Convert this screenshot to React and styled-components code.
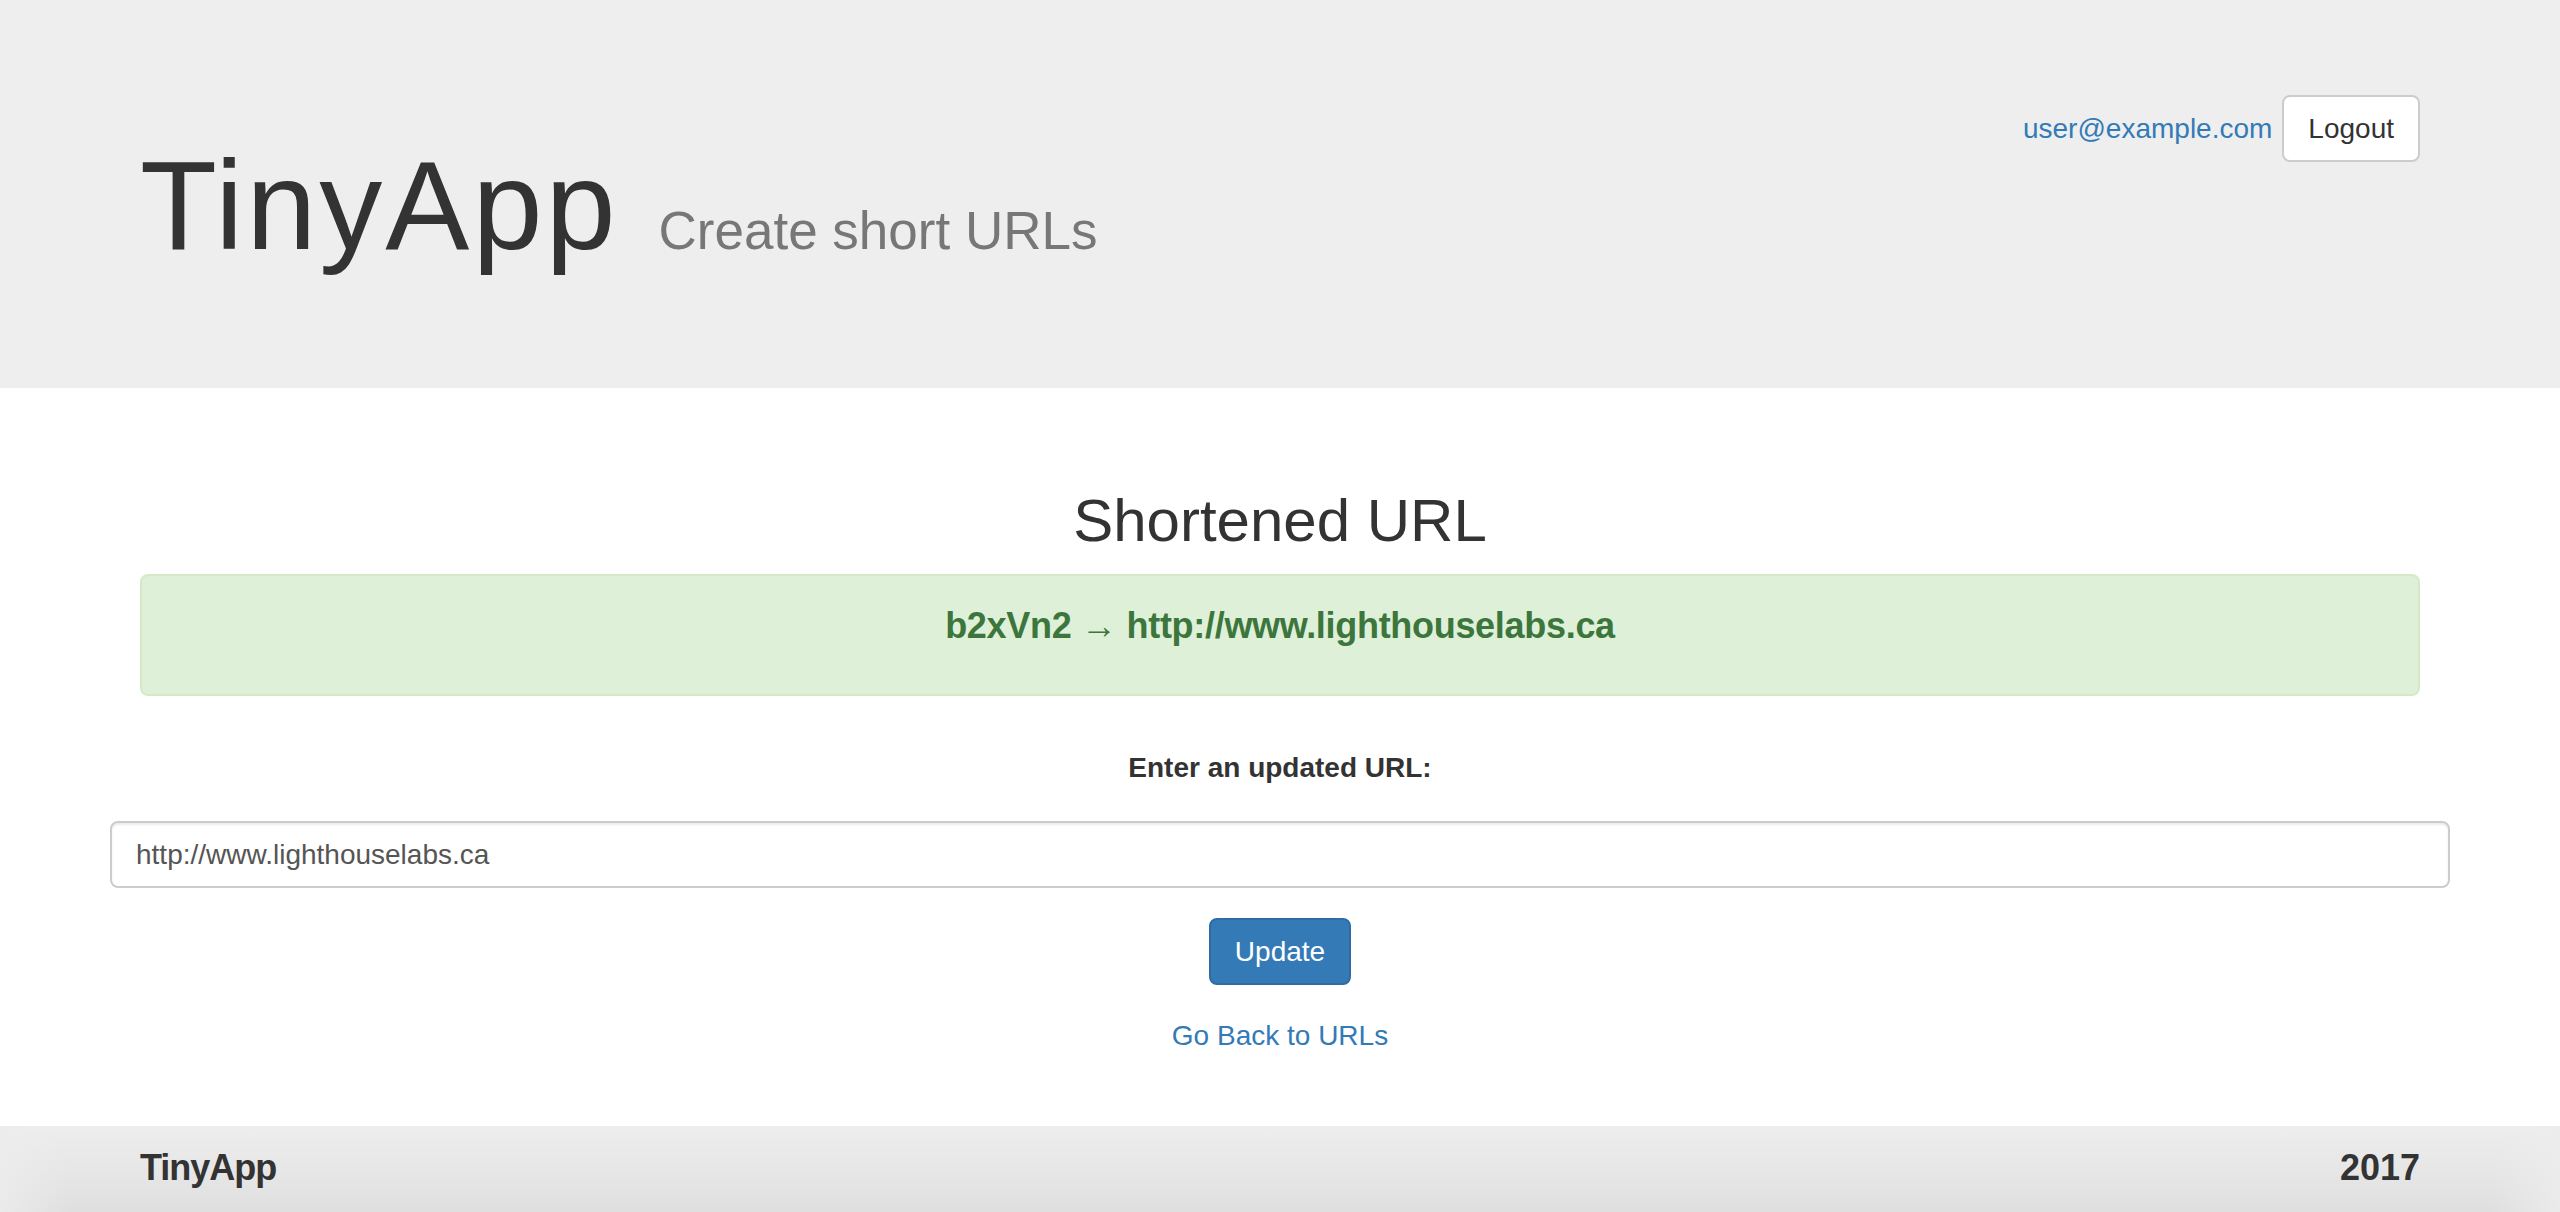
import React from "react";
import styled, { createGlobalStyle } from "styled-components";

const GlobalStyle = createGlobalStyle`
  html, body { margin: 0; padding: 0; background: #fff; }
  body {
    font-family: "Liberation Sans", Arial, Helvetica, sans-serif;
    font-size: 28px;
    line-height: 40px;
    color: #333;
  }
  * { box-sizing: border-box; }
`;

const Container = styled.div`
  width: ${(p) => (p.$wide ? 2340 : 2280)}px;
  margin: 0 auto;
`;

const Jumbotron = styled.header`
  background: #eeeeee;
  padding-bottom: 112px;
`;

const HeaderRow = styled(Container)`
  display: flex;
  justify-content: space-between;
  align-items: flex-start;
`;

const Title = styled.h1`
  margin: 136px 0 0;
  display: flex;
  align-items: baseline;
  height: 140px;
  font-size: 126px;
  line-height: 140px;
  font-weight: 400;
  color: #333;
  letter-spacing: 3px;
`;

const Subtitle = styled.span`
  margin-left: 40px;
  font-size: 53px;
  line-height: 60px;
  color: #777;
  letter-spacing: 0;
`;

const UserNav = styled.nav`
  margin-top: 95px;
  display: flex;
  align-items: center;
  gap: 10px;
`;

const Link = styled.a`
  color: #337ab7;
  text-decoration: none;
  font-size: 28px;
  line-height: 40px;
`;

const Button = styled.button`
  font-family: inherit;
  font-size: 28px;
  line-height: 40px;
  height: 67px;
  padding: 0 24px;
  border-radius: 8px;
  border: 2px solid ${(p) => (p.$primary ? "#2e6da4" : "#cccccc")};
  background: ${(p) => (p.$primary ? "#337ab7" : "#ffffff")};
  color: ${(p) => (p.$primary ? "#ffffff" : "#333333")};
  cursor: pointer;
`;

const Main = styled.main`
  padding-top: 100px;
`;

const Heading = styled.h2`
  margin: 0 0 20px;
  text-align: center;
  font-size: 60px;
  line-height: 66px;
  font-weight: 400;
  color: #333;
`;

const Alert = styled.div`
  background: #dff0d8;
  border: 2px solid #d6e9c6;
  border-radius: 8px;
  padding: 30px;
  color: #3c763d;
  text-align: center;
`;

const AlertText = styled.h4`
  margin: 0 0 18px;
  font-size: 36px;
  line-height: 40px;
  font-weight: 700;
  letter-spacing: -0.3px;
`;

const Form = styled.form`
  margin-top: 52px;
  display: flex;
  flex-direction: column;
  align-items: center;
`;

const Label = styled.label`
  font-weight: 700;
  font-size: 28px;
  line-height: 40px;
  margin-bottom: 33px;
`;

const Input = styled.input`
  width: 100%;
  height: 67px;
  padding: 0 24px;
  font-family: inherit;
  font-size: 28px;
  color: #555;
  background: #fff;
  border: 2px solid #cccccc;
  border-radius: 8px;
  box-shadow: inset 0 2px 2px rgba(0, 0, 0, 0.075);
  outline: none;
  margin-bottom: 30px;
`;

const BackLink = styled(Link)`
  display: block;
  margin-top: 31px;
  text-align: center;
`;

const Footer = styled.footer`
  margin-top: 70px;
  height: 86px;
  padding-top: 22px;
  background:
    linear-gradient(to right, rgba(236,236,236,0.9) 0, rgba(236,236,236,0) 70px,
      rgba(236,236,236,0) calc(100% - 70px), rgba(236,236,236,0.9) 100%),
    linear-gradient(to bottom, #ededed 0%, #e6e6e6 55%, #dfdfdf 100%);
`;

const FooterRow = styled(Container)`
  display: flex;
  justify-content: space-between;
  align-items: baseline;
`;

const FooterText = styled.span`
  font-size: 36px;
  line-height: 40px;
  font-weight: 700;
  color: #333;
  letter-spacing: ${(p) => (p.$tight ? "-1px" : "0")};
`;

export default function App() {
  return (
    <>
      <GlobalStyle />
      <Jumbotron>
        <HeaderRow>
          <Title>
            TinyApp
            <Subtitle>Create short URLs</Subtitle>
          </Title>
          <UserNav>
            <Link href="#">user@example.com</Link>
            <Button type="button">Logout</Button>
          </UserNav>
        </HeaderRow>
      </Jumbotron>
      <Main>
        <Container>
          <Heading>Shortened URL</Heading>
          <Alert>
            <AlertText>b2xVn2 → http://www.lighthouselabs.ca</AlertText>
          </Alert>
        </Container>
        <Container $wide>
          <Form onSubmit={(e) => e.preventDefault()}>
            <Label htmlFor="longURL">Enter an updated URL:</Label>
            <Input id="longURL" type="text" defaultValue="http://www.lighthouselabs.ca" />
            <Button type="submit" $primary>Update</Button>
          </Form>
        </Container>
        <BackLink href="#">Go Back to URLs</BackLink>
      </Main>
      <Footer>
        <FooterRow>
          <FooterText $tight>TinyApp</FooterText>
          <FooterText>2017</FooterText>
        </FooterRow>
      </Footer>
    </>
  );
}
